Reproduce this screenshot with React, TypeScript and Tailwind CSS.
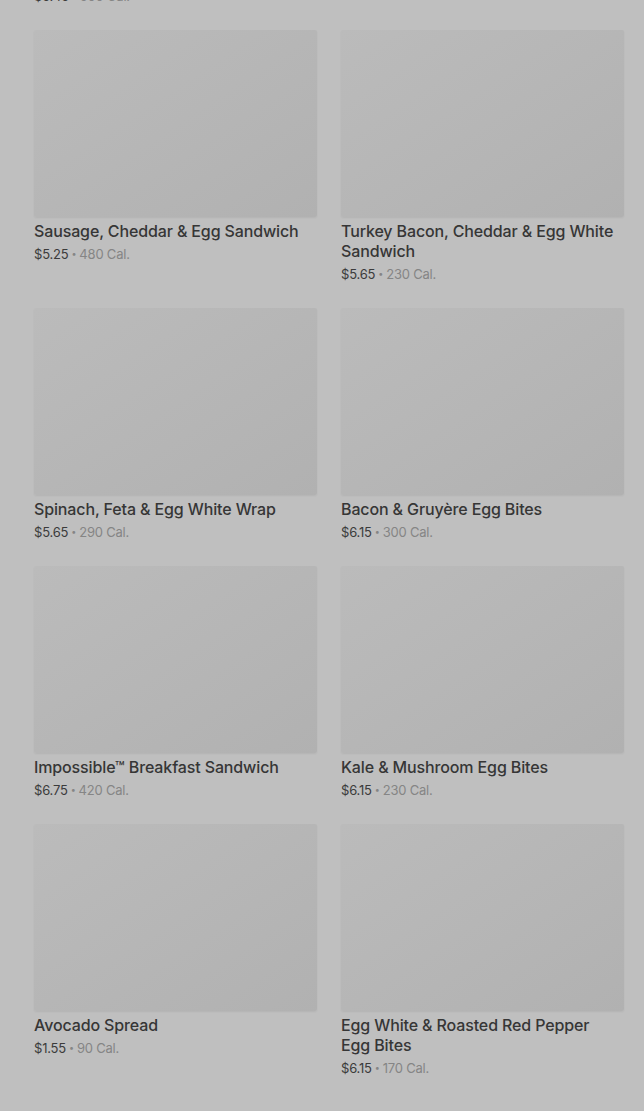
import React from "react";

type Item = { name: string; price: string; cal: string };

const items: Item[] = [
  { name: "Sausage, Cheddar & Egg Sandwich", price: "$5.25", cal: "480 Cal." },
  { name: "Turkey Bacon, Cheddar & Egg White Sandwich", price: "$5.65", cal: "230 Cal." },
  { name: "Spinach, Feta & Egg White Wrap", price: "$5.65", cal: "290 Cal." },
  { name: "Bacon & Gruyère Egg Bites", price: "$6.15", cal: "300 Cal." },
  { name: "Impossible™ Breakfast Sandwich", price: "$6.75", cal: "420 Cal." },
  { name: "Kale & Mushroom Egg Bites", price: "$6.15", cal: "230 Cal." },
  { name: "Avocado Spread", price: "$1.55", cal: "90 Cal." },
  { name: "Egg White & Roasted Red Pepper Egg Bites", price: "$6.15", cal: "170 Cal." },
];

function PriceLine({ price, cal }: { price: string; cal: string }) {
  return (
    <div className="flex items-center text-[13px] leading-[20px] text-[#3b3b3b] tracking-[-0.2px]">
      <span>{price}</span>
      <span className="mx-[3px] text-[9px] text-[#858585]">•</span>
      <span className="text-[#858585]">{cal}</span>
    </div>
  );
}

function Card({ item }: { item: Item }) {
  return (
    <div className="flex flex-col">
      <div className="h-[187px] w-full rounded-[2px] bg-gradient-to-br from-[#bbbbbb] to-[#b1b1b1] shadow-[0_1px_2px_rgba(0,0,0,0.06)]" />
      <div className="mt-1 pr-[6px] text-[16px] leading-[20px] font-medium tracking-[-0.13px] text-[#363636]">
        {item.name}
      </div>
      <div className="mt-[3px]">
        <PriceLine price={item.price} cal={item.cal} />
      </div>
    </div>
  );
}

export default function App() {
  return (
    <div
      className="min-h-[1111px] w-full overflow-hidden bg-[#bfbfbf] pl-[34px] pr-[20px]"
      style={{ fontFamily: "Inter, 'Noto Sans', sans-serif" }}
    >
      <div className="-mt-[14px] grid grid-cols-2 gap-x-[24px] gap-y-[24px]">
        <PriceLine price="$5.45" cal="500 Cal." />
        <div />
        {items.map((it) => (
          <Card key={it.name} item={it} />
        ))}
      </div>
    </div>
  );
}
